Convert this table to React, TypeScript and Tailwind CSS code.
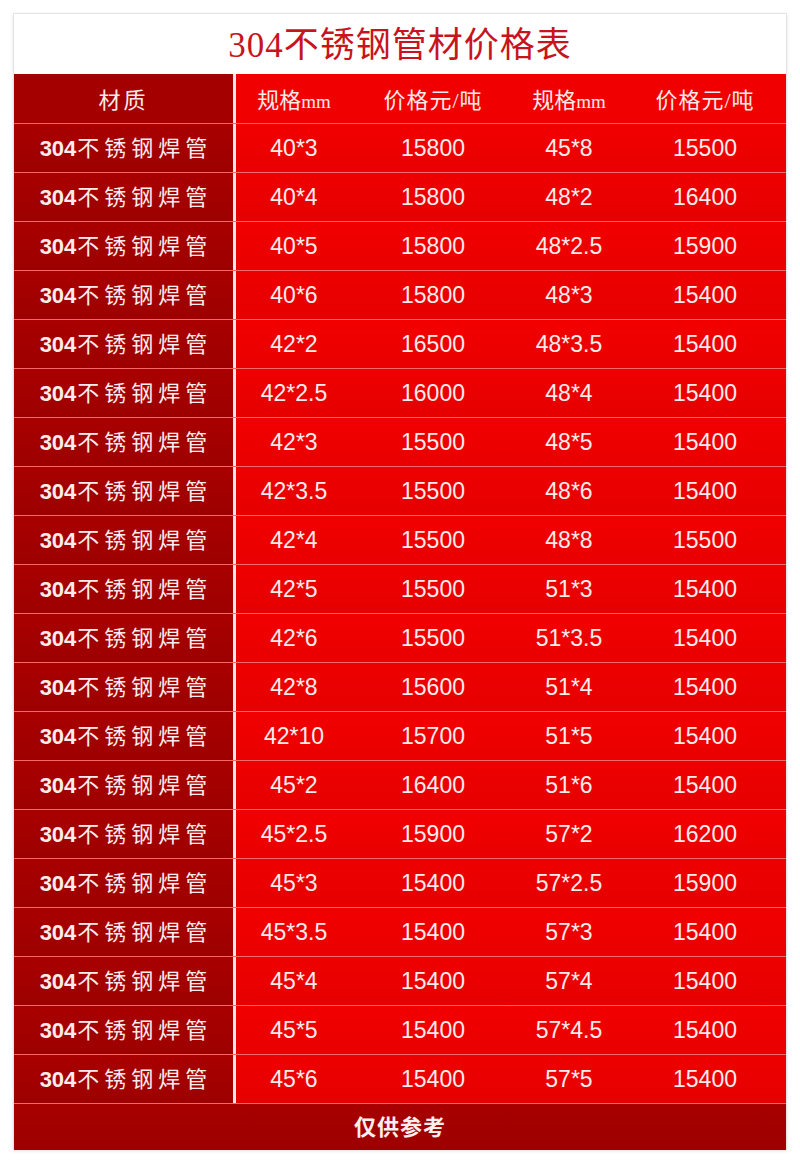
import React from 'react'

const rows: [string, string, string, string][] = [
  ['40*3', '15800', '45*8', '15500'],
  ['40*4', '15800', '48*2', '16400'],
  ['40*5', '15800', '48*2.5', '15900'],
  ['40*6', '15800', '48*3', '15400'],
  ['42*2', '16500', '48*3.5', '15400'],
  ['42*2.5', '16000', '48*4', '15400'],
  ['42*3', '15500', '48*5', '15400'],
  ['42*3.5', '15500', '48*6', '15400'],
  ['42*4', '15500', '48*8', '15500'],
  ['42*5', '15500', '51*3', '15400'],
  ['42*6', '15500', '51*3.5', '15400'],
  ['42*8', '15600', '51*4', '15400'],
  ['42*10', '15700', '51*5', '15400'],
  ['45*2', '16400', '51*6', '15400'],
  ['45*2.5', '15900', '57*2', '16200'],
  ['45*3', '15400', '57*2.5', '15900'],
  ['45*3.5', '15400', '57*3', '15400'],
  ['45*4', '15400', '57*4', '15400'],
  ['45*5', '15400', '57*4.5', '15400'],
  ['45*6', '15400', '57*5', '15400'],
]

// widths of the four value columns, left to right
const colW = ['w-[116px]', 'w-[162px]', 'w-[110px]', 'flex-1']

const sans = "font-['Liberation_Sans','Noto_Sans_CJK_SC',sans-serif]"
const serif = "font-['Liberation_Serif','Noto_Sans_CJK_SC',serif]"

function HeaderRow() {
  const heads = ['规格', '价格元/吨', '规格', '价格元/吨']
  return (
    <div className={`flex h-[50px] border-b border-[#f26464] text-[22px] text-[#fbeaea] ${serif}`}>
      <div className="flex w-[219px] items-center justify-center bg-[#a50000] pt-[3px] tracking-[3px]">材质</div>
      <div className="w-[3px] bg-[#f6e6e6]" />
      <div className="flex flex-1 bg-[#f00000] pt-[3px]">
        {heads.map((h, i) => (
          <div key={i} className={`${colW[i]} flex items-center justify-center`}>
            {h === '规格' ? (
              <span>
                规格<span className="text-[19px]">mm</span>
              </span>
            ) : (
              <span className="tracking-[1px]">{h}</span>
            )}
          </div>
        ))}
      </div>
    </div>
  )
}

function DataRow({ cells, even }: { cells: [string, string, string, string]; even: boolean }) {
  return (
    <div className={`flex h-[49px] border-b border-[#f46868] text-[#fdeceb] ${sans}`}>
      <div className="flex w-[219px] items-center justify-center bg-gradient-to-b from-[#a90000] to-[#9d0000] text-[22px]">
        <span className="font-bold">304</span>
        <span className="tracking-[5px] mr-[-5px] ml-[1px]">不锈钢焊管</span>
      </div>
      <div className="w-[3px] bg-[#f6e6e6]" />
      <div className={`flex flex-1 bg-gradient-to-b ${even ? 'from-[#f20000] to-[#e90000]' : 'from-[#ee0000] to-[#e60000]'} text-[23px]`}>
        {cells.map((c, i) => (
          <div key={i} className={`${colW[i]} flex items-center justify-center`}>{c}</div>
        ))}
      </div>
    </div>
  )
}

export default function App() {
  return (
    <div className="h-[1163px] w-[800px] bg-white px-[13px] pt-[13px]">
      <div className="border-x border-t border-[#e4e4e4] shadow-[0_1px_3px_rgba(0,0,0,0.12)]">
        <div className={`flex h-[60px] items-center justify-center pt-[5px] text-[35px] tracking-[1px] text-[#c8141c] ${serif}`}>
          304不锈钢管材价格表
        </div>
        <HeaderRow />
        {rows.map((r, i) => (
          <DataRow key={i} cells={r} even={i % 2 === 0} />
        ))}
        <div className={`flex h-[46px] items-center justify-center bg-gradient-to-b from-[#a80000] to-[#9c0000] text-[22px] font-bold tracking-[1px] text-[#fdeeee] ${sans}`}>
          仅供参考
        </div>
      </div>
    </div>
  )
}
